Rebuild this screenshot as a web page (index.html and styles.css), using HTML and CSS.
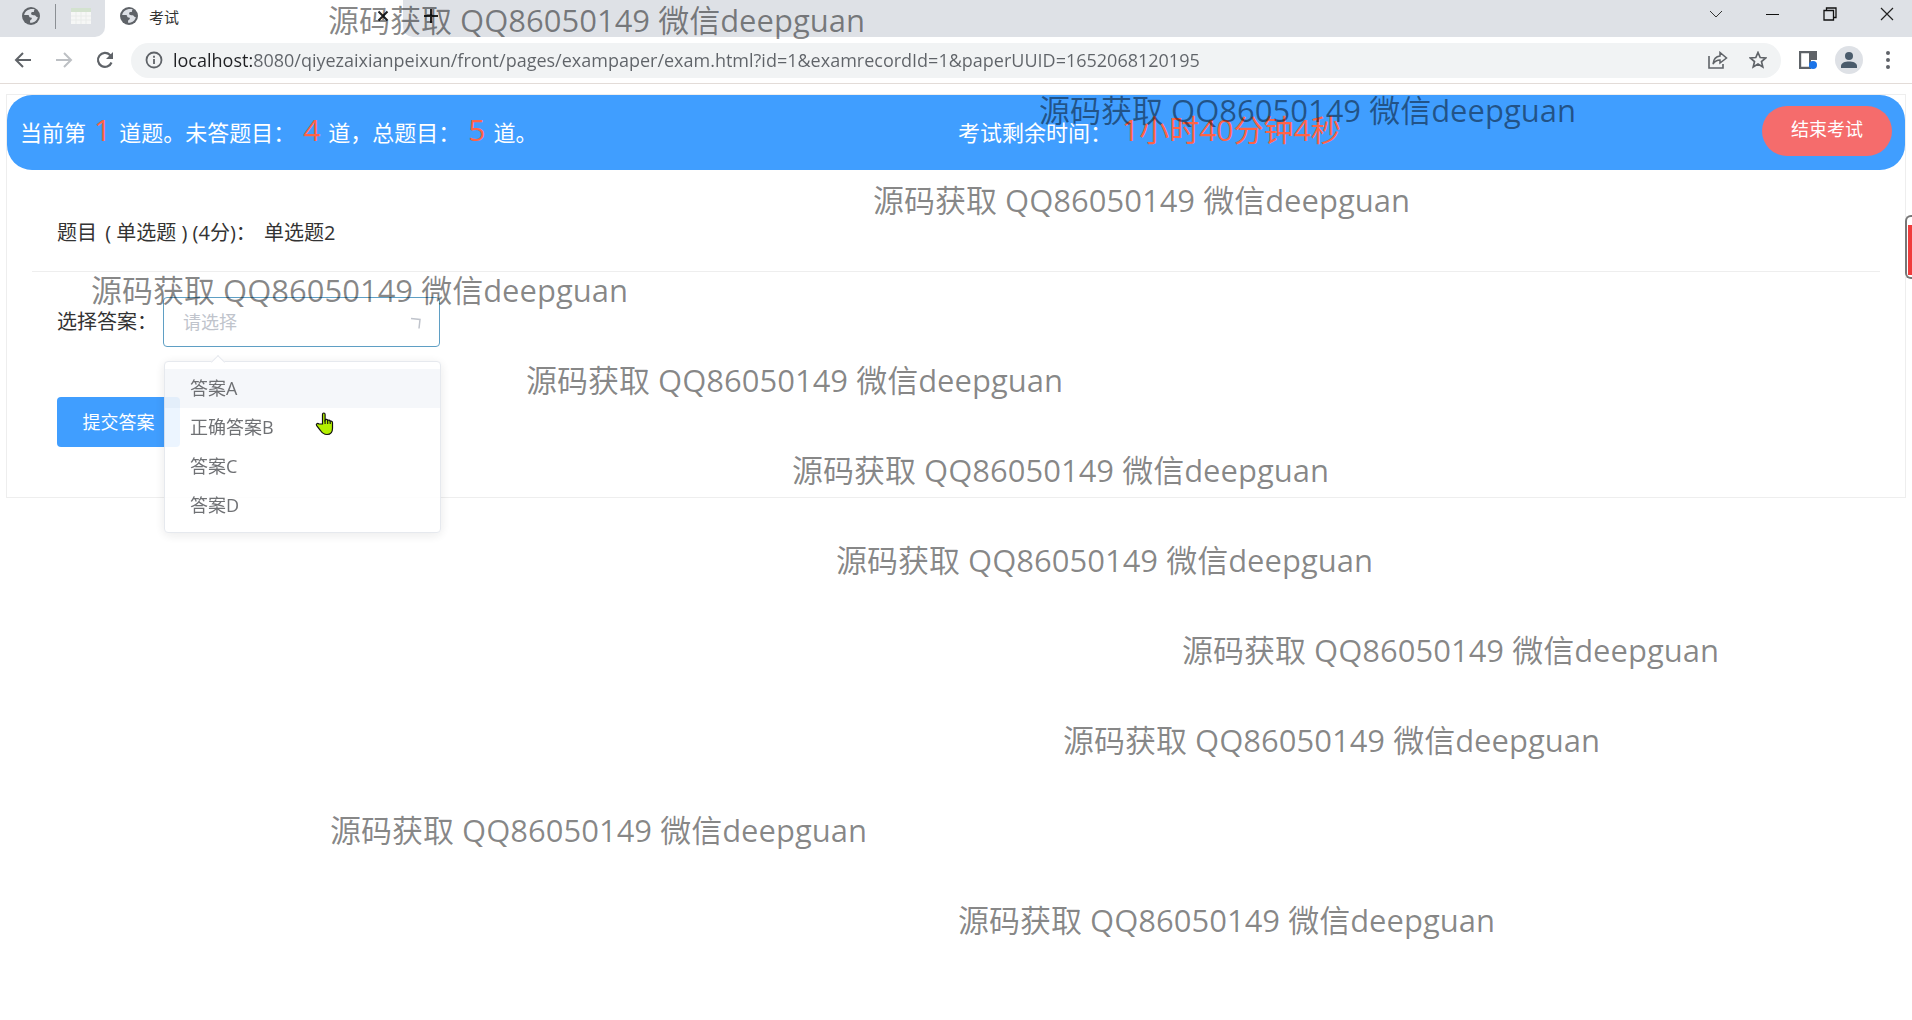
FILE: index.html
```
<!DOCTYPE html>
<html lang="zh-CN">
<head>
	<meta charset="utf-8">
	<meta name="viewport" content="width=device-width, initial-scale=1">
	<title>考试</title>
	<link rel="stylesheet" href="styles.css">
</head>
<body>

<svg class="defs" width="0" height="0" aria-hidden="true">
	<symbol id="globe" viewBox="0 0 18 18">
		<circle cx="9" cy="9" r="9" fill="#5f6368"/>
		<path d="M8 2.2c-3 .5-5.400 2.800-5.900 5.700l3.600.2c1 0 1.500.6 1.500 1.400 0 .8.8 1 1.800 1.100.8.1 1 .7.7 1.400-.3.8-1.200.8-1.500 1.400-.2.500-.2 1.500-.1 2.400.8.100 2 0 2.700-.2 2.600-.8 4.600-3 5-5.700-.9.2-1.700-.1-2.100-.9-.4-.9-1.300-.7-2.400-.7-1.300 0-2.200-.6-2.200-1.700s.9-1.500 1.900-1.500c.9 0 1.100-.5 1.100-1.300-.1-.9.300-1.100.8-1.300C11.400 2 9.600 1.900 8 2.200z" fill="#dee1e6"/>
	</symbol>
</svg>

<div class="browser">
	<div class="tabs">
		<div class="pinned">
			<svg class="favicon" width="18" height="18"><use href="#globe"/></svg>
			<i class="split"></i>
			<svg width="20" height="16" viewBox="0 0 20 16"><path d="M0 0h20v16H0z" fill="#f6f7f6"/><path d="M0 0h20v4H0z" fill="#d3e2cf"/><path d="M0 8h20M0 12h20M5 4v12M10 4v12M15 4v12" stroke="#e9ecea"/></svg>
		</div>
		<div class="tab">
			<svg class="favicon" width="18" height="18"><use href="#globe"/></svg>
			<span class="title">考试</span>
			<button class="icon" aria-label="关闭标签页"><svg width="12" height="12" viewBox="0 0 12 12"><path d="M1.500 1.500l9 9m0-9l-9 9" stroke="#222" stroke-width="2"/></svg></button>
		</div>
		<button class="icon plus" aria-label="新标签页"><svg width="14" height="14" viewBox="0 0 14 14"><path d="M7 0v14M0 7h14" stroke="#222" stroke-width="2"/></svg></button>
		<div class="win">
			<button class="icon" aria-label="搜索标签页"><svg width="14" height="14" viewBox="0 0 14 14"><path d="M1 4l6 6 6-6" fill="none" stroke="#333"/></svg></button>
			<button class="icon" aria-label="最小化"><svg width="14" height="14" viewBox="0 0 14 14"><path d="M0 7.500h13" stroke="#111"/></svg></button>
			<button class="icon" aria-label="还原"><svg width="14" height="14" viewBox="0 0 14 14"><path d="M1 3.500h9.500V13H1zM3.500 3.500V1H13v9.500h-2.500" fill="none" stroke="#111" stroke-width="1.300"/></svg></button>
			<button class="icon" aria-label="关闭"><svg width="14" height="14" viewBox="0 0 14 14"><path d="M1 1l12 12m0-12L1 13" stroke="#222" stroke-width="1.200"/></svg></button>
		</div>
	</div>
	<div class="toolbar">
		<button class="icon nav" aria-label="后退"><svg width="18" height="18" viewBox="0 0 18 18"><path d="M17 9H2m7-7L2 9l7 7" fill="none" stroke="#5f6368" stroke-width="2"/></svg></button>
		<button class="icon nav" aria-label="前进"><svg width="18" height="18" viewBox="0 0 18 18"><path d="M1 9h15M9 2l7 7-7 7" fill="none" stroke="#bdc0c4" stroke-width="2"/></svg></button>
		<button class="icon nav" aria-label="重新加载"><svg width="18" height="18" viewBox="0 0 18 18"><path d="M15.500 11.500A7 7 0 1 1 14 4l1 1" fill="none" stroke="#5f6368" stroke-width="2.200"/><path d="M17 1v7h-7z" fill="#5f6368"/></svg></button>
		<div class="address">
			<svg width="18" height="18" viewBox="0 0 18 18"><circle cx="9" cy="9" r="7.500" fill="none" stroke="#5f6368" stroke-width="1.800"/><path d="M9 8v5M9 4.800v2" stroke="#5f6368" stroke-width="1.800"/></svg>
			<input class="url" type="text" aria-label="地址" value="localhost:8080/qiyezaixianpeixun/front/pages/exampaper/exam.html?id=1&amp;examrecordId=1&amp;paperUUID=1652068120195">
			<button class="icon" aria-label="分享"><svg width="20" height="18" viewBox="0 0 20 18"><path d="M1 5v12h14v-4" fill="none" stroke="#5f6368" stroke-width="1.600"/><path d="M5 13c.5-5 3-7.500 7-8V1.500L18.500 7 12 12V9c-3 0-5 1-7 4z" fill="none" stroke="#5f6368" stroke-width="1.500"/></svg></button>
			<button class="icon" aria-label="收藏"><svg width="18" height="18" viewBox="0 0 18 18"><path d="M9 1.500l2.200 5 5.500.5-4.200 3.600 1.300 5.400L9 13.100 4.200 16l1.300-5.400L1.300 7l5.500-.5z" fill="none" stroke="#5f6368" stroke-width="1.700"/></svg></button>
		</div>
		<button class="icon panel" aria-label="侧边栏"><svg width="18" height="18" viewBox="0 0 18 18"><path d="M0 0h18v9h-6v9H0zM2.200 2.200v13.600H10V2.200z" fill="#5f6368" fill-rule="evenodd"/><path d="M10 2.200h6V9h-6z" fill="#5f6368"/><circle cx="14" cy="14" r="4" fill="#1a73e8"/></svg></button>
		<button class="icon avatar" aria-label="用户"><svg width="28" height="28" viewBox="0 0 28 28"><circle cx="14" cy="14" r="14" fill="#dee1e6"/><circle cx="14" cy="10" r="4" fill="#4a5b6b"/><path d="M6 22v-2c0-3.200 4-4.500 8-4.500s8 1.300 8 4.500v2z" fill="#4a5b6b"/></svg></button>
		<button class="icon more" aria-label="菜单"><svg width="4" height="18" viewBox="0 0 4 18"><g fill="#5f6368"><circle cx="2" cy="2" r="2"/><circle cx="2" cy="9" r="2"/><circle cx="2" cy="16" r="2"/></g></svg></button>
	</div>
</div>

<main class="exam">
	<header class="bar">
		<div class="progress">当前第<b>1</b>道题。未答题目：<b>4</b>道，总题目：<b>5</b>道。</div>
		<div class="timer">
			<span>考试剩余时间：<em>1小时40分钟4秒</em></span>
			<button class="end">结束考试</button>
		</div>
	</header>

	<section class="paper">
		<h1 class="question">题目 <span>( 单选题 )</span> (4分)： <span>单选题2</span></h1>
		<form class="answer">
			<div class="row">
				<label for="answer">选择答案：</label>
				<div class="picker">
					<select id="answer">
						<option>请选择</option>
						<option>答案A</option>
						<option>正确答案B</option>
						<option>答案C</option>
						<option>答案D</option>
					</select>
					<svg class="caret" width="12" height="12" viewBox="0 0 12 12"><path d="M1 1.500l9 1-1 9" fill="none" stroke="#c0c4cc" stroke-width="1.500"/></svg>
					<ul class="menu" role="listbox" aria-label="选择答案">
						<li class="on" role="option">答案A</li>
						<li role="option">正确答案B</li>
						<li role="option">答案C</li>
						<li role="option">答案D</li>
					</ul>
				</div>
			</div>
			<button class="submit" type="button">提交答案</button>
		</form>
	</section>
</main>

<div class="recorder"><i></i></div>

<svg class="hand" width="20" height="24" viewBox="0 0 20 24"><path d="M7.500 12V2.500c0-2 2.600-2 2.600 0V8c.6-1 2.500-.8 2.600.5.600-.8 2.300-.5 2.500.8.900-.6 2.300-.1 2.300 1.400v5.500c0 4-2 6.300-5.500 6.300-3.600 0-5-1.500-6.700-4.200l-3.600-4.600c-1.100-1.700.8-2.900 2.200-1.700z" fill="#b4f000" stroke="#111" stroke-width="1.200"/><path d="M10.100 8v4m2.600-3.500V12m2.500-2.700V12" stroke="#111" stroke-width="1.100"/></svg>

<div class="marks">
	<p style="margin-left: 328px">源码获取 QQ86050149 微信deepguan</p>
	<p style="margin-left: 1039px">源码获取 QQ86050149 微信deepguan</p>
	<p style="margin-left: 873px">源码获取 QQ86050149 微信deepguan</p>
	<p style="margin-left: 91px">源码获取 QQ86050149 微信deepguan</p>
	<p style="margin-left: 526px">源码获取 QQ86050149 微信deepguan</p>
	<p style="margin-left: 792px">源码获取 QQ86050149 微信deepguan</p>
	<p style="margin-left: 836px">源码获取 QQ86050149 微信deepguan</p>
	<p style="margin-left: 1182px">源码获取 QQ86050149 微信deepguan</p>
	<p style="margin-left: 1063px">源码获取 QQ86050149 微信deepguan</p>
	<p style="margin-left: 330px">源码获取 QQ86050149 微信deepguan</p>
	<p style="margin-left: 958px">源码获取 QQ86050149 微信deepguan</p>
</div>

</body>
</html>
```
FILE: styles.css
```
*{
	box-sizing: border-box;
}
body{
	margin: 0;
	min-height: 100vh;
	background: #fff;
	color: #333;
	font-family: "Open Sans", "Noto Sans CJK SC", sans-serif;
	font-size: 18px;
}
button, input, select{
	font: inherit;
	border: 0;
	padding: 0;
}
svg{
	display: block;
	flex: none;
}
.defs{
	position: absolute;
}
.icon{
	display: flex;
	align-items: center;
	justify-content: center;
	background: none;
	flex: none;
}

/* browser chrome */
.browser{
	border-bottom: 1px solid #e3dcd8;
}
.tabs{
	display: flex;
	height: 37px;
	background: linear-gradient(#fff, #fff) 90px 0 / 330px 100% no-repeat #dee1e6;
}
.pinned{
	display: flex;
	align-items: center;
	width: 105px;
	padding: 0 0 5px 22px;
	background: #dee1e6;
	border-radius: 0 0 10px 0;
}
.split{
	width: 1px;
	height: 25px;
	margin: 0 15px;
	background: #8b8f94;
}
.tab{
	display: flex;
	align-items: center;
	width: 298px;
	padding: 0 14px 5px 15px;
}
.title{
	flex: 1;
	margin-left: 11px;
	font-size: 15px;
}
.plus{
	width: 56px;
	padding-bottom: 5px;
	background: #dee1e6;
	border-radius: 0 0 0 10px;
}
.win{
	display: flex;
	gap: 43px;
	height: 27px;
	margin-left: auto;
	padding-right: 18px;
}
.toolbar{
	display: flex;
	align-items: center;
	height: 46px;
	padding: 0 22px 0 14px;
}
.nav{
	width: 18px;
	margin-right: 23px;
}
.nav:nth-child(3){
	margin-right: 17px;
}
.address{
	display: flex;
	align-items: center;
	flex: 1;
	height: 35px;
	padding: 0 14px;
	border-radius: 18px;
	background: #f1f3f4;
}
.address .icon{
	margin-left: 21px;
}
.url{
	flex: 1;
	min-width: 0;
	height: 32px;
	margin-left: 10px;
	outline: 0;
	color: transparent;
	font-size: 18px;
	/* host part darker than the path */
	background: linear-gradient(to right, #202124 79px, #5f6368 79px);
	-webkit-background-clip: text;
	background-clip: text;
}
.panel{
	margin-left: 18px;
}
.avatar{
	margin: 0 23px 0 18px;
}

/* exam page */
.exam{
	margin: 10px 6px;
	border: 1px solid #eee;
}
.bar{
	display: grid;
	grid-template-columns: 1fr 1fr;
	align-items: center;
	height: 75px;
	padding: 0 13px 4px;
	border-radius: 25px;
	background: #409eff;
	color: #fff;
	font-size: 22px;
	line-height: 40px;
	white-space: nowrap;
}
.bar b, .bar em{
	color: #ff6347;
	font-size: 30px;
	font-weight: 400;
	font-style: normal;
}
.bar b{
	margin: 0 8px;
}
.timer{
	display: flex;
	align-items: center;
	justify-content: space-between;
	padding-left: 2px;
}
.timer em{
	margin-left: 10px;
}
.end{
	width: 130px;
	height: 50px;
	border-radius: 25px;
	background: #f56c6c;
	color: #fff;
	font-size: 18px;
}
.end, .submit{
	padding-bottom: 3px;
}
.paper{
	padding: 25px;
}
.question{
	margin: 0;
	padding: 20px 25px;
	border-bottom: 1px solid #eee;
	color: #333;
	font-size: 20px;
	font-weight: 400;
	line-height: 36px;
	white-space: pre;
}
.question span{
	margin-left: 3px;
}
.answer{
	padding: 25px;
}
.row{
	display: flex;
	align-items: center;
	margin-bottom: 50px;
	font-size: 20px;
}
.row label{
	width: 106px;
	padding-bottom: 4px;
	white-space: nowrap;
}
.picker{
	position: relative;
	width: 277px;
}
.picker select{
	display: block;
	width: 100%;
	height: 50px;
	padding: 0 19px;
	border: 1px solid #5f9fc4;
	border-radius: 4px;
	background: #fff;
	color: #c0c4cc;
	font-size: 18px;
	appearance: none;
	outline: 0;
}
.caret{
	position: absolute;
	top: 20px;
	right: 18px;
}
.menu{
	position: absolute;
	top: 64px;
	left: 1px;
	width: 100%;
	margin: 0;
	padding: 7px 0;
	border: 1px solid #e4e7ed;
	border-radius: 4px;
	background: #fff;
	box-shadow: 0 2px 12px rgba(0,0,0,.1);
	color: #606266;
	font-size: 18px;
	list-style: none;
	opacity: .9;
}
.menu:before{
	content: "";
	position: absolute;
	top: -5px;
	left: 48px;
	width: 9px;
	height: 9px;
	border: solid #e4e7ed;
	border-width: 1px 0 0 1px;
	background: #fff;
	transform: rotate(45deg);
}
.menu li{
	padding: 0 25px;
	line-height: 39px;
}
.menu .on{
	background: #f5f7fa;
}
.submit{
	display: block;
	width: 123px;
	height: 50px;
	border-radius: 4px;
	background: #409eff;
	color: #fff;
}

/* things floating over the page */
.recorder{
	position: absolute;
	top: 215px;
	right: 0;
	width: 7px;
	height: 64px;
	padding: 8px 0 2px 1px;
	border: 2px solid #777;
	border-right: 0;
	border-radius: 6px 0 0 6px;
	background: #fff;
}
.recorder i{
	display: block;
	height: 100%;
	background: #f03c3c;
}
.hand{
	position: absolute;
	top: 412px;
	left: 315px;
}
.marks{
	position: absolute;
	top: 0;
	left: 0;
	color: rgba(0,0,0,.47);
	font-size: 31px;
	line-height: 40px;
	white-space: nowrap;
	pointer-events: none;
}
.marks p{
	margin: 0 0 50px;
}
```
